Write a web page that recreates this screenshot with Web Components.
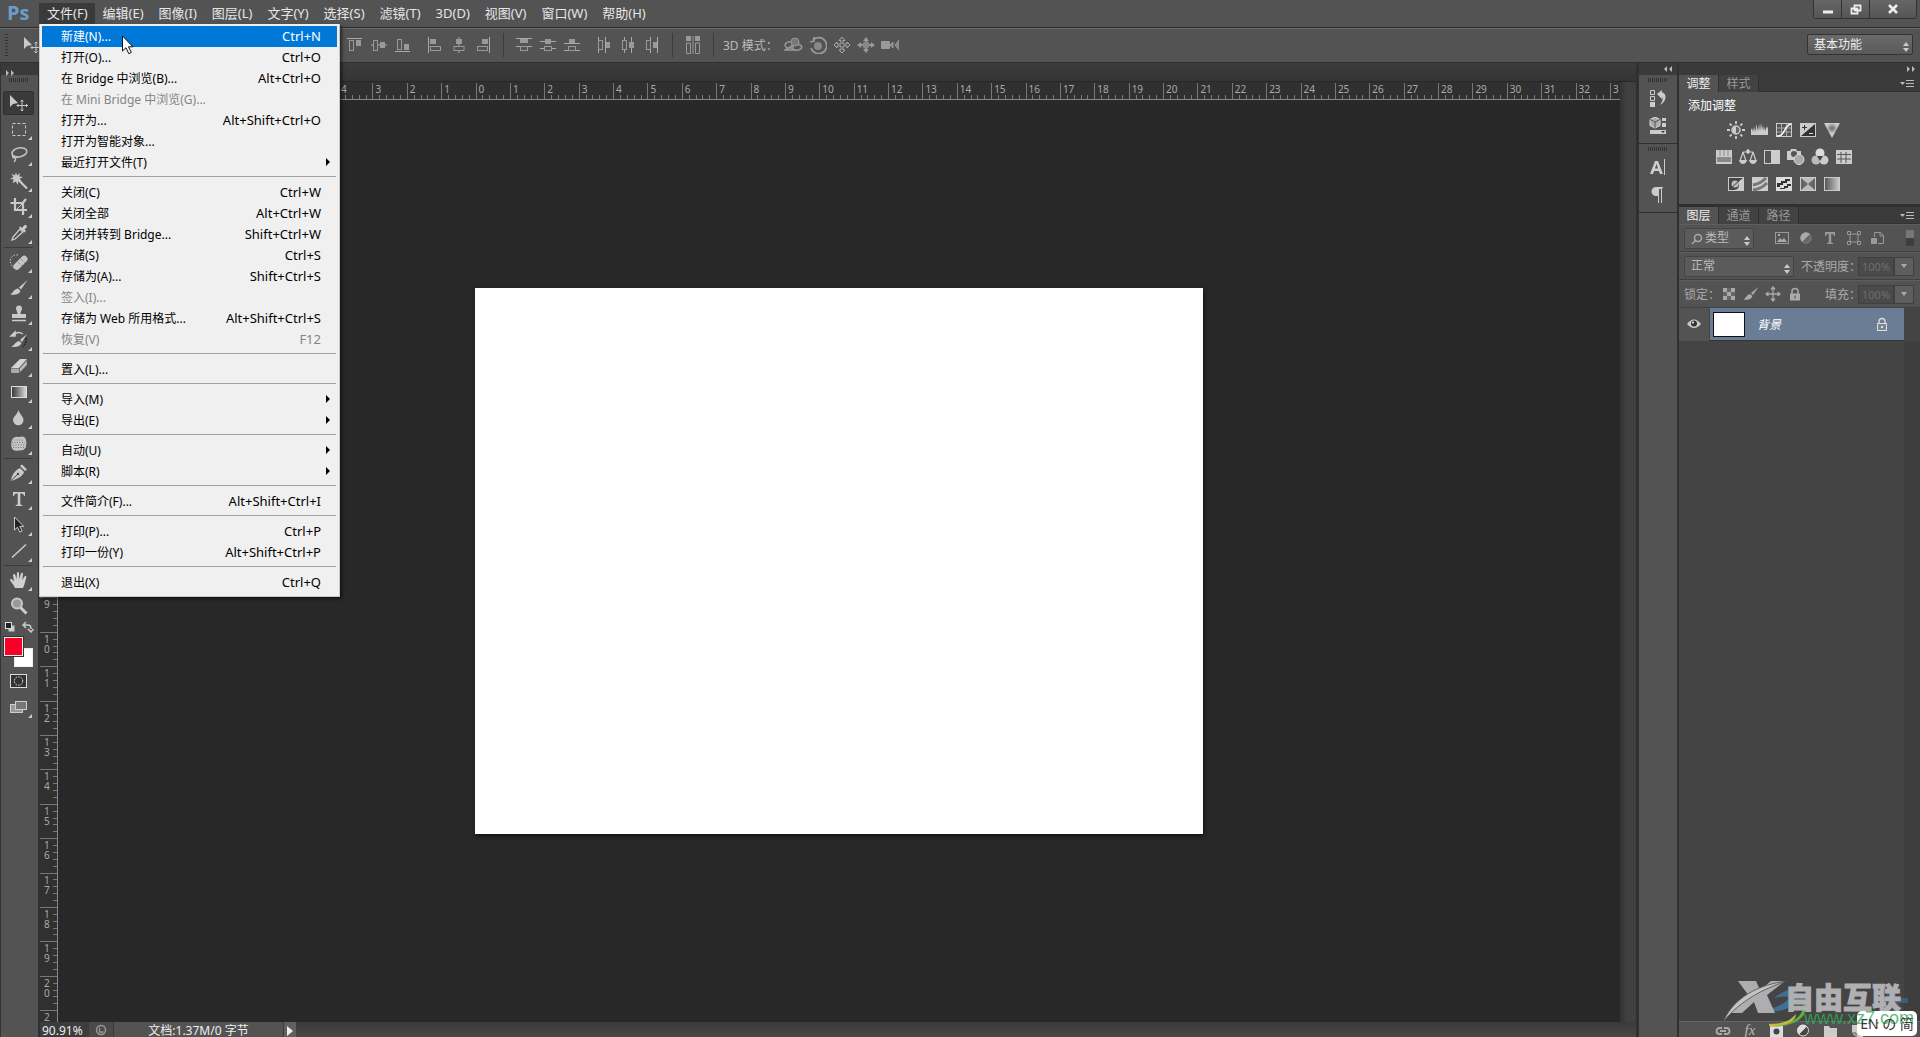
<!DOCTYPE html>
<html lang="zh-CN">
<head>
<meta charset="utf-8">
<title>Photoshop</title>
<style>
html,body{margin:0;height:100%}
body{background:#535353;color:#e6e6e6;font:12px "Noto Sans","Noto Sans CJK SC",sans-serif;overflow:hidden}
</style>
</head>
<body>
<ps-app></ps-app>
<script>
const ICONS = {
move:['20 20','<path d="M1 2v12l3-3 5-1z" fill="#c9c9c9"/><path d="M13 7v11M8 12.500h11M11.500 8.500 13 7l1.500 1.500M11.500 16.500 13 18l1.500-1.500M9.500 11 8 12.500 9.500 14M17 11l1.500 1.500L17 14" fill="none" stroke="#c9c9c9"/>'],
marquee:['20 20','<rect x="3.500" y="4.500" width="13" height="12" fill="none" stroke="#ccc" stroke-dasharray="3 2"/>'],
lasso:['20 20','<ellipse cx="10.500" cy="7.500" rx="7.500" ry="4.500" fill="none" stroke="#c4c4c4" stroke-width="1.600" transform="rotate(-12 10 8)"/><path d="M4 10c-1 2 0 3 2 3 1.500 1 0 3-1 4" fill="none" stroke="#c4c4c4" stroke-width="1.400"/>'],
wand:['20 20','<path d="M7 1l1 3.500L11 2l-.8 3.500L14 6l-3.200 1.800L13 11l-3.500-1L8.500 14 7 10.500 3.500 12l1.200-3.500L1 7.500l3.500-1.300L2.500 3 6 4.300z" fill="#c9c9c9"/><path d="M10 9.500l8 8" stroke="#c9c9c9" stroke-width="2.200"/>'],
crop:['20 20','<path d="M6 1v12h12M1.500 6H14v12M13 7l4-5" fill="none" stroke="#c9c9c9" stroke-width="2.200"/><path d="M8 12l5-5" stroke="#ccc"/>'],
eyedrop:['20 20','<path d="M3 17l1-3 7-8 3 3-8 7z" fill="none" stroke="#ccc" stroke-width="1.300"/><path d="M10 4.500l1.500-1 1.500 1.500 2.500-3q2.500-.5 2.500 2L15.500 6.500 17 8l-1.500 1.500z" fill="#ccc"/>'],
heal:['20 20','<path d="M9 3C3 2 0 7 2 12s4 4 4 4" fill="none" stroke="#ccc" stroke-dasharray="1.500 1.500"/><rect x="3" y="7.500" width="17" height="6.500" rx="3" fill="#c6c6c6" transform="rotate(-45 11.500 10.750)"/><path d="M9 10l4 4M12 7l4 4" stroke="#777" stroke-dasharray="1 1"/>'],
brush:['20 20','<path d="M18.500 2L10 9.500l2 2z" fill="#ccc"/><path d="M9 10.500l2.500 2.500C10 17 6 17 1 16.500c3-1 3-5 8-6z" fill="#ccc"/>'],
stamp:['20 20','<path d="M7 4.500a3 3 0 0 1 6 0c0 2-1.500 3-1.500 5.500H17v4H3v-4h5.500C8.500 7.500 7 6.500 7 4.500z" fill="#c9c9c9"/><path d="M3 16.500h14" stroke="#ccc" stroke-width="1.500"/>'],
history:['20 20','<path d="M18 4l-7 6 2 2z" fill="#ccc"/><path d="M10 11l2.500 2C11 17 7 17 2 17c3-1 4-5 8-6z" fill="#ccc"/><path d="M4 6c3-4 7-4 10-2M2 6l4-4v4z" fill="none" stroke="#ccc" stroke-width="1.500"/><path d="M17 8v4l-3 5" fill="none" stroke="#222" stroke-dasharray="2 1" stroke-width="1.500"/>'],
eraser:['20 20','<path d="M2 12L11 3h7l-8 9z" fill="#d4d4d4"/><path d="M2 12.500h8V17H3.500Q2 17 2 15.500z" fill="#aaa"/><path d="M10.800 12.500l7-8V9l-7 7.500z" fill="#bbb"/>'],
gradient:['20 20','<defs><linearGradient id="g"><stop stop-color="#333"/><stop offset="1" stop-color="#ddd"/></linearGradient></defs><rect x="2.500" y="4.500" width="15" height="11" fill="url(#g)" stroke="#ddd"/>'],
drop:['20 20','<path d="M9.500 2c1 4 5 6.500 5 10a5 5 0 0 1-10.500 0c0-3 4.500-6 5.500-10z" fill="#c9c9c9"/>'],
sponge:['20 20','<path d="M3 6q2-4 7-3 6-2 7 3 1 3 0 7-2 4-7 3.500Q4 18 2.500 13 1.500 9 3 6z" fill="#c4c4c4"/><path d="M5 6h10M3 8.500h13M4 11h13M4 13.500h12" stroke="#777" stroke-dasharray="1 1.500"/>'],
pen:['20 20','<path d="M1.500 18C3 12 6 7 11 5l4 4c-1 4-6 7-13.500 9z" fill="#c9c9c9"/><path d="M2 17.500L9 11" stroke="#444"/><circle cx="9" cy="11" r="1.200" fill="#444"/><path d="M13 1.500l5 5-2 1.500-5-5z" fill="#ccc"/>'],
type:['20 20','<path d="M4 3h12v4h-1q0-2.500-3-2.500h-.7V15q0 1 2 1v1H6.700v-1q2 0 2-1V4.500H8Q5 4.500 5 7H4z" fill="#ccc"/>'],
select:['20 20','<path d="M5.500 2v13l3-2.800 2.300 5 2.300-1.200-2.300-4.600h4z" fill="#222" stroke="#ccc"/>'],
line:['20 20','<path d="M3 16.500L17 3.500" stroke="#ccc" stroke-width="1.500"/>'],
hand:['20 20','<path d="M6 18c-1-3-4-6-5-8 0-1.500 2-1.200 3 .5l1 1L4 5c0-1.500 2-1.500 2.300 0L7.500 9 8 3c.2-1.500 2-1.500 2 0l.3 6L12 3.500c.6-1.400 2.200-.8 2 .5L13.300 10l2.200-3.500c.8-1.300 2.200-.5 1.800.8C16.500 11 15.500 15 14 18z" fill="#d0d0d0"/>'],
zoom:['20 20','<circle cx="8" cy="7.500" r="5" fill="#999" stroke="#c6c6c6" stroke-width="2"/><path d="M11.500 11.500l6 6" stroke="#ccc" stroke-width="3"/>'],
defcol:['12 12','<rect x="4.500" y="4.500" width="6" height="6" fill="#ccc"/><rect x="1.500" y="1.500" width="6" height="6" fill="#222" stroke="#ddd"/>'],
swap:['12 12','<path d="M1 4h5q3 0 3 4M4 1L1 4l3 3M6 8l3 3 2.500-3" fill="none" stroke="#ccc" stroke-width="1.500"/>'],
qmask:['20 20','<rect x="1.500" y="3.500" width="16" height="13" fill="#333" stroke="#ddd"/><circle cx="9.500" cy="10" r="4.200" fill="none" stroke="#eee" stroke-dasharray="1.500 1.200"/>'],
screen:['20 20','<rect x="1.500" y="7.500" width="12" height="8" fill="#999" stroke="#ccc"/><rect x="6.500" y="4.500" width="11" height="8" fill="#777" stroke="#ccc"/>'],
at:['16 16','<path d="M0 1.500h15" stroke="#aaa"/><rect x="2.500" y="3.500" width="4" height="10" fill="none" stroke="#999"/><rect x="9" y="3" width="5" height="6" fill="#999"/>'],
am:['16 16','<path d="M0 8h16" stroke="#aaa"/><rect x="2.500" y="3.500" width="4" height="10" fill="#535353" stroke="#999"/><rect x="9" y="5" width="5" height="6" fill="#999"/>'],
ab:['16 16','<path d="M0 14.500h15" stroke="#aaa"/><rect x="2.500" y="2.500" width="4" height="10" fill="none" stroke="#999"/><rect x="9" y="7" width="5" height="6" fill="#999"/>'],
al:['16 16','<path d="M1.500 0v16" stroke="#aaa"/><rect x="3" y="2" width="6" height="5" fill="#999"/><rect x="3.500" y="9.500" width="10" height="4" fill="none" stroke="#999"/>'],
ac:['16 16','<path d="M8 0v16" stroke="#aaa"/><rect x="5" y="2" width="6" height="5" fill="#999"/><rect x="3" y="9.500" width="10" height="4" fill="#535353" stroke="#999"/>'],
ar:['16 16','<path d="M14.500 0v16" stroke="#aaa"/><rect x="7" y="2" width="6" height="5" fill="#999"/><rect x="2.500" y="9.500" width="10" height="4" fill="none" stroke="#999"/>'],
dt:['16 16','<path d="M0 1.500h16M0 9.500h16" stroke="#aaa"/><rect x="4" y="2" width="8" height="4" fill="#999"/><rect x="4.500" y="9.500" width="7" height="4" fill="none" stroke="#999"/>'],
dm:['16 16','<path d="M0 4.500h16M0 11.500h16" stroke="#aaa"/><rect x="5" y="2" width="6" height="5" fill="#999"/><rect x="4.500" y="9.500" width="7" height="4" fill="#535353" stroke="#999"/>'],
db:['16 16','<path d="M0 6.500h16M0 13.500h16" stroke="#aaa"/><rect x="5" y="2" width="6" height="4" fill="#999"/><rect x="4.500" y="9.500" width="7" height="4" fill="none" stroke="#999"/>'],
dl:['16 16','<path d="M2.500 0v16M9.500 0v16" stroke="#aaa"/><rect x="2.500" y="3.500" width="4" height="9" fill="none" stroke="#999"/><rect x="10" y="5" width="4" height="6" fill="#999"/>'],
dc:['16 16','<path d="M4.500 0v16M11.500 0v16" stroke="#aaa"/><rect x="2.500" y="3.500" width="4" height="9" fill="#535353" stroke="#999"/><rect x="9" y="5" width="5" height="6" fill="#999"/>'],
dr:['16 16','<path d="M6.500 0v16M13.500 0v16" stroke="#aaa"/><rect x="2.500" y="3.500" width="4" height="9" fill="none" stroke="#999"/><rect x="9" y="5" width="4" height="6" fill="#999"/>'],
auto:['18 18','<rect x="2" y="0" width="5" height="5" fill="#999"/><rect x="11" y="0" width="5" height="5" fill="#999"/><path d="M2.500 7v10.500h4V7zM11.500 7v10.500h4V7z" fill="none" stroke="#999"/><path d="M9 0v18" stroke="#999"/>'],
o1:['20 18','<path d="M8 6C2 5-1 9 3 12h5M1 14h8V9zM13 8c6 1 6 5 1 6-2 .5-4 0-6-1" fill="none" stroke="#999" stroke-width="1.500"/><circle cx="11" cy="6" r="4" fill="#777" stroke="#999"/>'],
o2:['18 18','<circle cx="9" cy="10" r="4" fill="#888"/><path d="M4 4a8 8 0 1 1-2 8M5 1v4l-4 1" fill="none" stroke="#999" stroke-width="1.800"/>'],
o3:['18 18','<path d="M9 1l3 3.500h-2V8h4V6l3 3-3 3v-2h-4v4h2l-3 3-3-3h2v-4H4v2L1 9l3-3v2h4V4.500H6z" fill="none" stroke="#aaa"/>'],
o4:['18 18','<path d="M9 1l3 4H6zM9 17l-3-4h6zM0 9l4-3v6zM18 9l-4-3v6z" fill="#999"/><path d="M4 9h10M9 5v8" stroke="#999" stroke-width="2"/><circle cx="9" cy="9" r="3.500" fill="#888"/>'],
o5:['20 18','<rect x="1" y="5" width="9" height="8" rx="1" fill="#999"/><path d="M10 9l3-3v6zM19 4l-4 5 4 5" fill="#888" stroke="#999"/>'],
hist:['18 18','<path d="M1.500 1.500h4v4h-4zM1.500 7.500h4v4h-4z" fill="none" stroke="#ccc"/><rect x="1" y="13" width="5" height="5" fill="#ccc"/><path d="M8 5l5-4v2.500c5 .5 5 9-2 12.500 3-4 3-7 2-8v2z" fill="#ccc"/>'],
prop:['18 18','<path d="M6 0l5 2.500v6L6 11 1 8.500v-6z" fill="#aaa" stroke="#ddd"/><path d="M1 2.500L6 5l5-2.500M6 5v6" fill="none" stroke="#555"/><path d="M13 1h4v3h-4zM13 6h4v4h-4zM1 13h16v4H1z" fill="#ccc"/><path d="M12 14h4l-2 2z" fill="#333"/>'],
chr:['18 18','<path d="M1 16L6 3h3l5 13h-3l-1.200-3H5.200L4 16zM6 10.500h3L7.500 6z" fill="#ccc" fill-rule="evenodd"/><path d="M15.500 1v16" stroke="#ccc"/>'],
para:['18 18','<path d="M14 1H7a4.500 4.500 0 0 0 0 9h2v7h1V3h2v14h1V2h1z" fill="#ccc"/>'],
sun:['18 18','<circle cx="9" cy="9" r="4" fill="#666" stroke="#ccc" stroke-width="1.500"/><path d="M9 5.500a3.500 3.500 0 0 0 0 7z" fill="#ccc"/><path d="M9 0v3M9 15v3M0 9h3M15 9h3M2.700 2.700l2 2M13.300 13.300l2 2M2.700 15.300l2-2M13.300 4.700l2-2" stroke="#ccc" stroke-width="1.800"/>'],
levels:['18 18','<path d="M0 14V9l1-2 1 4V6l1 5 1-6v6l1-4V3l2 7 1-7 1 7 1-8 1 7 1-5v6l1-5 1 5 2-5 1 3v6z" fill="#ccc"/>'],
curves:['18 18','<rect x="1.500" y="2.500" width="15" height="13" fill="#555" stroke="#ccc"/><path d="M6.500 3v12M11.500 3v12M2 7h14M2 11h14" stroke="#aaa"/><path d="M2 15c9 0 6-10 14-12" fill="none" stroke="#fff" stroke-width="1.500"/>'],
expo:['18 18','<rect x="1.500" y="2.500" width="15" height="13" fill="#333" stroke="#ccc"/><path d="M2 15V3h14z" fill="#ccc"/><path d="M3 6.500h5M5.500 4v5" stroke="#333"/><path d="M10 12.500h4" stroke="#ddd"/>'],
vib:['18 18','<defs><radialGradient id="v" cy=".35"><stop stop-color="#666"/><stop offset=".7" stop-color="#ccc"/></radialGradient></defs><path d="M1 2h16L9 17z" fill="url(#v)"/>'],
hue:['18 18','<rect x="1" y="2" width="16" height="14" fill="#ccc"/><path d="M5 2v6M9 2v6M13 2v6" stroke="#888"/><rect x="2" y="9" width="14" height="5" fill="#888"/>'],
bal:['18 18','<path d="M4 4h10M9 1v5M4 4L1 13M4 4l3 9M14 4l-3 9M14 4l3 9" fill="none" stroke="#ccc" stroke-width="1.200"/><circle cx="9" cy="3.500" r="2" fill="#ccc"/><path d="M0 12h8q-1 4-4 4t-4-4zM10 12h8q-1 4-4 4t-4-4z" fill="#ccc"/>'],
bw:['18 18','<rect x="1.500" y="2.500" width="15" height="13" fill="#555" stroke="#ccc"/><rect x="8" y="3" width="8" height="12" fill="#ccc"/>'],
photo:['18 18','<path d="M0 3h3l1-2h5l1 2h4v9H0z" fill="#ccc"/><circle cx="7" cy="6" r="3" fill="#555"/><circle cx="12" cy="11.500" r="5" fill="#aaa" stroke="#ddd"/>'],
mixer:['18 18','<circle cx="9" cy="5" r="4.500" fill="#ddd"/><circle cx="5" cy="12" r="4.500" fill="#bbb"/><circle cx="13" cy="12" r="4.500" fill="#ccc"/><path d="M6 8h6l-3 5z" fill="#444"/>'],
lut:['18 18','<rect x="1" y="2" width="16" height="14" fill="#ccc"/><path d="M6 4v11M11 4v11M2 6.500h14M2 11h14" stroke="#555"/>'],
inv:['18 18','<rect x="1.500" y="2.500" width="15" height="13" fill="#444" stroke="#ccc"/><path d="M16 3v12H7q7-1 4-8z" fill="#ccc"/><circle cx="8" cy="9" r="3.500" fill="#bbb"/><path d="M5 12l7-6" stroke="#444"/>'],
post:['18 18','<rect x="1" y="2" width="16" height="14" fill="#ccc"/><path d="M2 10q7-1 13-7M2 15q8-1 14-7" stroke="#777" stroke-width="3" fill="none"/>'],
thr:['18 18','<rect x="1" y="2" width="16" height="14" fill="#ddd"/><path d="M2 10V8h4V6h4V4h5v2h-3v2H8v2H5v2H2zM5 14v-1h4v-2h3V9h4v2h-3v2h-3v1z" fill="#333"/>'],
sel:['18 18','<rect x="1.500" y="2.500" width="15" height="13" fill="#666" stroke="#ccc"/><path d="M2 3h14L9 9zM2 15h14L9 9z" fill="#bbb"/>'],
gmap:['18 18','<defs><linearGradient id="m"><stop stop-color="#555"/><stop offset="1" stop-color="#ccc"/></linearGradient></defs><rect x="1.500" y="2.500" width="15" height="13" fill="url(#m)" stroke="#ccc"/>'],
pmenu:['16 12','<path d="M0 4h5L2.500 7z" fill="#bbb"/><path d="M6 2.500h8M6 5.500h8M6 8.500h8" stroke="#bbb"/>'],
fimg:['18 18','<rect x="2.500" y="3.500" width="13" height="11" fill="#555" stroke="#999"/><path d="M4 13l3-4 2 2 2-2 3 4zM5 5h2v2H5z" fill="#aaa"/>'],
fadj:['18 18','<circle cx="9" cy="9" r="5" fill="#666" stroke="#888"/><path d="M5 13A5.500 5.500 0 1 1 13 5z" fill="#aaa"/>'],
ftype:['18 18','<path d="M4 3h10v4h-1q0-2-2-2h-.8v8q0 1 1.800 1v1H6v-1q1.800 0 1.800-1V5H7Q5 5 5 7H4z" fill="#999"/>'],
fshape:['18 18','<path d="M5 5h8v8H5z" fill="none" stroke="#999"/><path d="M2.500 2.500h3v3h-3zM12.500 2.500h3v3h-3zM2.500 12.500h3v3h-3zM12.500 12.500h3v3h-3z" fill="#535353" stroke="#999"/>'],
fsmart:['18 18','<path d="M5.500 8V3.500h6l3 3v8H9" fill="none" stroke="#999"/><path d="M11 3v4h4" fill="none" stroke="#999"/><rect x="2" y="9" width="6" height="6" fill="#999"/>'],
lpx:['14 14','<rect x="1" y="1" width="12" height="12" fill="#666"/><path d="M1 1h4v4H1zM9 1h4v4H9zM5 5h4v4H5zM1 9h4v4H1zM9 9h4v4H9z" fill="#aaa"/>'],
lbrush:['16 16','<path d="M15.500 1L8 7l2 2z" fill="#aaa"/><path d="M7 8l2.500 2C8 14 5 14 0 13.500 3 13 3 9 7 8z" fill="#aaa"/>'],
lmove:['16 16','<path d="M8 1v14M1 8h14M6 3.500L8 1l2 2.500M6 12.500L8 15l2-2.500M3.500 6L1 8l2.500 2M12.500 6L15 8l-2.500 2" fill="none" stroke="#aaa" stroke-width="1.300"/>'],
lock:['14 14','<path d="M4 7V4.500a3 3 0 0 1 6 0V7" fill="none" stroke="#aaa" stroke-width="1.500"/><rect x="2" y="6.500" width="10" height="7" fill="#aaa"/><rect x="6.500" y="8.500" width="1" height="3" fill="#444"/>'],
lock2:['14 14','<path d="M4 7V4.500a3 3 0 0 1 6 0V7" fill="none" stroke="#ddd" stroke-width="1.300"/><rect x="2.500" y="6.500" width="9" height="7" fill="#7b8796" stroke="#ddd"/><rect x="6" y="9" width="2" height="2" fill="#ddd"/>'],
eye:['14 12','<path d="M0 6q7-9 14 0-7 8-14 0z" fill="#ccc"/><circle cx="7" cy="5.500" r="3" fill="#333"/><circle cx="6" cy="4.500" r="1" fill="#fff"/>'],
search:['12 12','<circle cx="7" cy="5" r="3.500" fill="none" stroke="#aaa" stroke-width="1.500"/><path d="M4.500 7.500L1 11" stroke="#aaa" stroke-width="1.500"/>'],
link:['16 16','<path d="M7 5H4.500a3 3 0 0 0 0 6H7M9 5h2.500a3 3 0 0 1 0 6H9M5 8h6" fill="none" stroke="#aaa" stroke-width="1.800"/>'],
mask:['16 16','<rect x="1" y="3" width="13" height="11" fill="#ddd"/><circle cx="7.500" cy="8.500" r="3" fill="#444"/>'],
adj:['16 16','<circle cx="7" cy="7.500" r="5.500" fill="#444" stroke="#ddd"/><path d="M3 11.500A5.500 5.500 0 0 1 11 3.500z" fill="#ddd"/><path d="M12 14h4l-2 2z" fill="#ddd"/>'],
folder:['16 16','<path d="M1 3h5l1 2h7v9H1z" fill="#ccc"/>'],
newl:['16 16','<path d="M2 2h11v12H6l-4-4z" fill="#ccc"/><path d="M2 10h4v4" fill="none" stroke="#555"/>'],
min:['14 14','<path d="M2 10h10" stroke="#eee" stroke-width="3"/>'],
rest:['14 14','<path d="M5.500 3.500h6v5h-6zM2.500 6.500h6v5h-6z" fill="#444" stroke="#eee" stroke-width="1.800"/>'],
close:['14 14','<path d="M3 3l8 8M11 3l-8 8" stroke="#eee" stroke-width="2.500"/>'],
sync:['14 14','<circle cx="7" cy="7" r="4.500" fill="none" stroke="#999" stroke-width="1.500"/><path d="M5.500 4.500v4.500h4" fill="none" stroke="#999" stroke-width="1.300"/>'],
play:['8 10','<path d="M1 0l6 5-6 5z" fill="#eee"/>'],
right2:['10 8','<path d="M1 1l3 3-3 3zM6 1l3 3-3 3z" fill="#bbb"/>'],
left2:['10 8','<path d="M4 1L1 4l3 3zM9 1L6 4l3 3z" fill="#bbb"/>'],
arrow:['6 10','<path d="M1 1l4 4-4 4z" fill="#000"/>'],
updn:['6 10','<path d="M0 4l3-4 3 4zM0 6h6l-3 4z" fill="#ccc"/>'],
dn:['8 6','<path d="M1 1h6L4 5z" fill="#aaa"/>'],
cursor:['14 20','<path d="M1.500 1v15l3.500-3.300 2.800 6 2.500-1.200-2.800-5.700H12z" fill="#fff" stroke="#111"/>'],
xlogo:['70 48','<path d="M15 1h18l4 9L48 1h14L44 15l8 18H35l-4-11-12 11H8l18-17z" fill="#aeaeb0"/><path d="M0 42C8 24 26 6 64 1 40 9 18 20 0 42z" fill="#c4c4c6" stroke="#4a4a4a" stroke-width=".8"/>'],
swoosh:['150 48','<path d="M0 26c24 6 34-10 32-24C26 6 14 8 10 14c6-2 12-2 14 0C20 20 10 24 0 26z" fill="#3f7fae" opacity=".75"/><path d="M4 40c22 2 37-7 34-24 10 14-8 29-34 26z" fill="#5fae45"/><path d="M4 40c15 0 22-4 27-10 0 8-12 13-27 12z" fill="#c8b83c"/><path d="M122 8h9v6h12v5h-9v10h-7V19h-5z" fill="#3f6f96" opacity=".6"/>']
};
const define = (name, css, html) => customElements.define(name, class extends HTMLElement {
  connectedCallback(){
    if (this.shadowRoot) return;
    const root = this.attachShadow({mode:'open'});
    const t = document.createElement('template');
    t.innerHTML = '<style>*{box-sizing:border-box}button,input,select{font:inherit;color:inherit;margin:0;border-radius:0}'+css+'</style>'+(typeof html==='function'?html(this):html);
    root.append(t.content.cloneNode(true));
  }
});
const ic = n => `<ps-icon name="${n}"></ps-icon>`;

define('ps-icon', ':host{display:inline-flex;flex:none}svg{display:block}', el => {
  const [box, body] = ICONS[el.getAttribute('name')], [w,h] = box.split(' ');
  return `<svg width="${w}" height="${h}" viewBox="0 0 ${box}" aria-hidden="true">${body}</svg>`;
});

/* ---- top bars ---- */
define('ps-menubar', `:host{display:flex;height:28px;background:#535353;border-bottom:1px solid #2c2c2c;font-size:13px}
.logo{width:39px;padding-left:7px;font:bold 20px/25px "Open Sans",sans-serif;color:#6b9dc8}
nav{display:flex;flex:1;padding-top:3px}nav button{height:21px;padding:0 7px 0 8px;border:0;background:none;line-height:19px;white-space:nowrap}
nav button.on{background:#3a3a3a}
.win{display:flex;height:19px;margin-right:3px;border:1px solid #333;border-top:0;border-radius:0 0 3px 3px}
.win button{display:flex;align-items:center;justify-content:center;width:28px;padding:0;border:0;border-right:1px solid #333;background:linear-gradient(#666,#555)}
.win button:last-child{width:46px;border:0}`,
`<div class="logo">Ps</div><nav>${['文件(F)','编辑(E)','图像(I)','图层(L)','文字(Y)','选择(S)','滤镜(T)','3D(D)','视图(V)','窗口(W)','帮助(H)'].map((t,i)=>`<button${i?'':' class="on"'}>${t}</button>`).join('')}</nav>
<div class="win"><button aria-label="最小化">${ic('min')}</button><button aria-label="还原">${ic('rest')}</button><button aria-label="关闭">${ic('close')}</button></div>`);

define('ps-select', `:host{display:flex;position:relative;height:21px;color:#eee}
select{appearance:none;width:100%;padding:0 16px 1px 6px;border:1px solid #333;border-radius:2px;background:linear-gradient(#6b6b6b,#595959);outline:0}
:host([dim]) select{background:#5b5b5b;border-color:#444;color:#bbb}:host([icon]) select{padding-left:20px}
.a{position:absolute;right:4px;top:5px}.i{position:absolute;left:7px;top:4px}`,
el => `<select aria-label="${el.getAttribute('value')}"><option>${el.getAttribute('value')}</option></select>${el.hasAttribute('icon')?`<span class="i">${ic('search')}</span>`:''}<span class="a">${ic('updn')}</span>`);

define('ps-options', `:host{display:flex;align-items:center;height:35px;background:#535353;border-top:1px solid #6a6a6a;border-bottom:1px solid #303030;padding:0 7px 2px 5px}
.grip{width:3px;height:22px;background:repeating-linear-gradient(#333 0 1px,transparent 1px 3px)}
.cur{margin-left:15px;width:320px;display:flex}
.grp{display:flex}.grp button{display:flex;align-items:center;justify-content:center;width:24px;height:24px;padding:0;border:0;background:none}
.grp+.grp{margin-left:8px}.grp.mode{margin-left:4px}
hr{width:1px;height:24px;border:0;margin:0 8px;background:#3c3c3c}
.m{margin-left:1px;color:#bbb;white-space:nowrap}
ps-select{margin-left:auto;width:106px}`,
(()=>{const g=a=>`<div class="grp">${a.map(n=>`<button aria-label="${n}">${ic(n)}</button>`).join('')}</div>`;
return `<div class="grip"></div><div class="cur">${ic('move')}</div>${g(['at','am','ab'])}${g(['al','ac','ar'])}<hr>${g(['dt','dm','db'])}${g(['dl','dc','dr'])}<hr>${g(['auto'])}<hr><span class="m">3D 模式：</span>${g(['o1','o2','o3','o4','o5']).replace('"grp"','"grp mode"')}<ps-select value="基本功能"></ps-select>`})());

/* ---- file menu ---- */
define('ps-item', `:host{display:block}
button{display:flex;align-items:center;width:100%;height:21px;padding:0 16px 2px 19px;border:0;background:none;color:#000;white-space:nowrap}
:host([on]) button{background:#0078d7;color:#fff}:host([off]) button{color:#858585}
kbd{margin-left:auto;font:13px "Noto Sans",sans-serif}ps-icon{margin:0 -10px 0 auto}`,
el => `<button><slot></slot>${el.hasAttribute('sub')?ic('arrow'):`<kbd>${el.getAttribute('keys')||''}</kbd>`}</button>`);
define('ps-menu', `:host{display:block;width:301px;padding:2px 2px 3px;background:#f0f0f0;border:1px solid #c8c8c8;border-width:0 1px 1px;box-shadow:2px 2px 3px #0008;box-sizing:border-box}
::slotted(hr){height:1px;margin:3px 1px 5px;border:0;background:#a0a0a0}`, '<slot></slot>');

/* ---- tools ---- */
define('ps-tools', `:host{display:flex;flex-direction:column;align-items:center;width:40px;padding-right:2px;background:#535353;border-right:2px solid #303030;border-left:1px solid #333;box-sizing:border-box}
.hd{align-self:stretch;height:12px;margin-right:-2px;background:#3a3a3a;padding:1px 4px}.grip{width:20px;height:4px;margin:3px 0 8px;background:repeating-linear-gradient(90deg,#333 0 1px,transparent 1px 2px)}
.t{position:relative;display:flex;align-items:center;justify-content:center;width:31px;height:26px;padding:0;border:0;background:none}
.t.on{background:#3a3a3a;border:1px solid #303030;border-radius:2px;height:24px;margin:1px 0}
.t.sub::after{content:"";position:absolute;right:2px;bottom:2px;border:2px solid #ccc;border-color:transparent #ccc #ccc transparent}
hr{width:29px;height:1px;margin:1px 0;border:0;background:#3c3c3c}
.mini{display:flex;gap:6px;height:14px;margin-top:1px;align-items:center}
.sw{position:relative;width:29px;height:30px;margin:3px 0 1px}.sw i{position:absolute;width:19px;height:19px;border:1px solid #eee}
.fg{left:0;top:0;background:#fa0028;outline:1px solid #333}.bg{right:0;bottom:0;background:#fff}`,
(()=>{const b=(n,s=1)=>`<button class="t${s?' sub':''}" aria-label="${n}">${ic(n)}</button>`,g=a=>a.map(n=>b(n)).join('');
return `<div class="hd">${ic('right2')}</div><div class="grip"></div><button class="t on" aria-label="move">${ic('move')}</button>${g(['marquee','lasso','wand','crop','eyedrop'])}<hr>${g(['heal','brush','stamp','history','eraser','gradient','drop','sponge'])}<hr>${g(['pen','type','select','line'])}<hr>${b('hand')}${b('zoom',0)}<div class="mini">${ic('defcol')}${ic('swap')}</div><div class="sw"><i class="bg"></i><i class="fg"></i></div>${b('qmask',0)}${b('screen')}`})());

/* ---- rulers: five divisions for each unit ---- */
define('ps-ruler', `:host{display:flex;background:#303030;color:#aaa;font-size:10px;line-height:10px;overflow:hidden}
.c{flex:1 1 0;position:relative;display:flex;min-width:0;min-height:0;align-items:flex-end}
.c i{flex:1 1 0;height:4px;border-left:1px solid #777}.c i:first-of-type{height:16px}
.c b{position:absolute;left:3px;top:1px;font-weight:normal}
:host([axis=x]){border-bottom:1px solid #888;padding:1px 0 0 5px}:host([axis=x]) .end{flex:0 0 10px}
:host([axis=y]){flex-direction:column;border-right:1px solid #888;padding-top:16px}
:host([axis=y]) .c{flex-direction:column}:host([axis=y]) .c i{height:auto;width:4px;border-left:0;border-top:1px solid #777}
:host([axis=y]) .c i:first-of-type{width:17px}:host([axis=y]) .c b{left:4px;top:2px;width:7px;word-break:break-all}
:host([axis=y]) .end{flex:0 0 12px}`,
el => {const x=el.getAttribute('axis')==='x',s=x?-12:-5,e=x?33:21,f=+el.getAttribute('from');let o='';
for(let n=s;n<=e;n++)o+=`<div class="c${n===e?' end':''}">${n>=f?`<b>${n===e?String(n)[0]:Math.abs(n)}</b>`:''}${(n===e?'<i></i>':'<i></i>'.repeat(5))}</div>`;return o;});

define('ps-work', `:host{display:grid;flex:1;min-width:0;grid-template:19px 18px 1fr 15px/18px 1fr 16px;background:#282828}
.strip{grid-column:1/-1;background:linear-gradient(#3c3c3c,#343434);border-bottom:1px solid #282828}
.corner{background:#303030;border:solid #888;border-width:0 1px 1px 0}
.track{grid-column:3;grid-row:2/4;background:linear-gradient(90deg,#333,#404040 40%)}
.cv{display:flex;align-items:center;justify-content:center;min-height:0;padding:0}
.doc{width:728px;height:546px;background:#fff;box-shadow:1px 2px 4px #0009}
.st{grid-column:1/-1;display:flex;align-items:center;background:#404040;line-height:15px;color:#eee;white-space:nowrap}
.st>*{height:15px}
.z{width:49px;padding:1px 0 0 2px;background:#3c3c3c}
.s{width:24px;display:flex;justify-content:center;background:#4a4a4a;padding-top:1px}
.d{width:171px;padding-top:1px;text-align:center;background:#535353;border:solid #3a3a3a;border-width:0 1px}
.p{display:flex;align-items:center;justify-content:center;width:12px;padding:2px 0 0;border:0;background:#606060}
.h{flex:1;background:linear-gradient(#3a3a3a,#484848)}`,
`<div class="strip"></div><div class="corner"></div><ps-ruler axis="x" from="-4"></ps-ruler><div class="track"></div><ps-ruler axis="y" from="9"></ps-ruler><div class="cv"><div class="doc"></div></div>
<div class="st"><span class="z">90.91%</span><span class="s">${ic('sync')}</span><span class="d">文档:1.37M/0 字节</span><button class="p" aria-label="菜单">${ic('play')}</button><span class="h"></span></div>`);

/* ---- docks ---- */
define('ps-dock', `:host{display:flex;flex-direction:column;width:43px;background:#535353;border:solid #303030;border-width:0 2px 0 3px;box-sizing:border-box}
.hd{height:12px;background:#3a3a3a;display:flex;justify-content:flex-end;padding:2px 4px 0}
.g{display:flex;flex-direction:column;align-items:center;height:69px;border-bottom:1px solid #303030}
.g i{flex:none;width:20px;height:4px;margin:3px 0 2px;background:repeating-linear-gradient(90deg,#333 0 1px,transparent 1px 2px)}
button{flex:none;display:flex;align-items:center;justify-content:center;width:28px;height:28px;padding:0;border:0;background:none}`,
`<div class="hd">${ic('left2')}</div><div class="g"><i></i><button aria-label="历史记录">${ic('hist')}</button><button aria-label="属性">${ic('prop')}</button></div><div class="g"><i></i><button aria-label="字符">${ic('chr')}</button><button aria-label="段落">${ic('para')}</button></div>`);

define('ps-tabs', `:host{display:flex;height:17px;background:#3b3b3b;border-bottom:1px solid #333;align-items:stretch;box-sizing:border-box}
button{width:40px;padding:0;border:0;border-right:1px solid #303030;background:#424242;color:#999;line-height:15px;height:17px}
button.on{background:#535353;color:#eee}span{margin:2px 4px 0 auto}`,
el => el.getAttribute('tabs').split(',').map((t,i)=>`<button${i?'':' class="on"'}>${t}</button>`).join('')+`<span>${ic('pmenu')}</span>`);

define('ps-adjust', `:host{display:block;height:115px;background:#535353;border-bottom:3px solid #303030;color:#fff;box-sizing:border-box}
.t{padding:5px 9px 2px;line-height:17px;height:24px}
.r{display:flex;justify-content:center;height:27px;align-items:center;padding-right:32px}
button{display:flex;justify-content:center;width:24px;padding:0;border:0;background:none}`,
(()=>{const r=a=>`<div class="r">${a.map(n=>`<button aria-label="${n}">${ic(n)}</button>`).join('')}</div>`;
return `<div class="t">添加调整</div>${r(['sun','levels','curves','expo','vib'])}${r(['hue','bal','bw','photo','mixer','lut'])}${r(['inv','post','thr','sel','gmap'])}`})());

define('ps-percent', `:host{display:flex;align-items:center;margin-left:auto;color:#aaa}
label{width:57px;white-space:nowrap}:host([short]) label{width:33px}
input{width:36px;height:19px;padding:0 3px;border:1px solid #404040;background:#4a4a4a;color:#6e6e6e;font-size:11px;outline:0}
button{display:flex;align-items:center;justify-content:center;width:20px;height:19px;padding:0;border:1px solid #404040;background:#5e5e5e}`,
el => `<label for="v">${el.getAttribute('label')}</label><input id="v" value="100%"><button aria-label="${el.getAttribute('label')}">${ic('dn')}</button>`);

define('ps-layers', `:host{display:flex;flex-direction:column;flex:1;min-height:0;background:#444}
.row{display:flex;align-items:center;height:28px;padding:0 6px 0 5px;background:#535353;border-bottom:1px solid #404040;border-top:1px solid #5e5e5e;color:#aaa}
.f ps-select{width:70px;margin-right:16px}.f .b{display:flex;width:24px;justify-content:center}
.tg{width:8px;height:16px;margin-left:auto;background:linear-gradient(#777 50%,#3d3d3d 50%)}
.m{width:110px}.k{flex:none;width:34px;white-space:nowrap}.l .b{display:flex;width:22px;justify-content:center}
.layer{display:flex;height:33px;background:#6b7d95;margin-right:16px;align-items:center;border-bottom:1px solid #333}
.e{display:flex;align-items:center;justify-content:center;width:31px;height:33px;background:#535353;border-right:1px solid #444}
.th{width:32px;height:25px;margin:0 12px 0 3px;background:#fff;border:1px solid #111}
.n{flex:1;font-style:italic;color:#fff}.layer>ps-icon{margin-right:15px}
.mid{flex:1;display:flex;justify-content:flex-end}.mid i{width:16px;background:#3e3e3e}
.ft{display:flex;align-items:center;height:16px;padding:2px 0 0 32px;background:#535353;border-top:1px solid #666;gap:3px}
.ft button{display:flex;align-items:center;justify-content:center;width:24px;height:15px;padding:0;border:0;background:none;color:#bbb;font:italic 15px/15px "Liberation Serif",serif}`,
`<div class="row f"><ps-select dim icon value="类型"></ps-select>${['fimg','fadj','ftype','fshape','fsmart'].map(n=>`<span class="b">${ic(n)}</span>`).join('')}<i class="tg"></i></div>
<div class="row"><ps-select dim class="m" value="正常"></ps-select><ps-percent label="不透明度："></ps-percent></div>
<div class="row l"><span class="k">锁定：</span>${['lpx','lbrush','lmove','lock'].map(n=>`<span class="b">${ic(n)}</span>`).join('')}<ps-percent short label="填充："></ps-percent></div>
<div class="layer"><span class="e">${ic('eye')}</span><span class="th"></span><span class="n">背景</span>${ic('lock2')}</div>
<div class="mid"><i></i></div>
<div class="ft"><button aria-label="链接">${ic('link')}</button><button>fx</button>${['mask','adj','folder','newl'].map(n=>`<button aria-label="${n}">${ic(n)}</button>`).join('')}</div>`);

define('ps-panels', `:host{display:flex;flex-direction:column;width:241px;background:#444}
.hd{height:12px;background:#3a3a3a;display:flex;justify-content:flex-end;padding:2px 4px 0}`,
`<div class="hd">${ic('right2')}</div><ps-tabs tabs="调整,样式"></ps-tabs><ps-adjust></ps-adjust><ps-tabs tabs="图层,通道,路径"></ps-tabs><ps-layers></ps-layers>`);

define('ps-mark', `:host{display:block;width:197px;height:57px;position:relative}
.x{position:absolute;left:0;top:0}.s{position:absolute;left:42px;top:4px}
.cn{position:absolute;left:62px;top:-1px;font:900 29px/34px "Noto Sans CJK SC",sans-serif;color:#b0b0b3;-webkit-text-stroke:1px #b0b0b3;white-space:nowrap}
.url{position:absolute;left:81px;top:28px;font:18px/20px "Liberation Sans",sans-serif;color:#2fae5acc}
.box,.ime{position:absolute;right:3px;bottom:1px;width:60px;height:25px;border-radius:5px}
.box{background:#fff}
.ime{color:#333;font:14px/25px "Noto Sans","Noto Sans CJK SC",sans-serif;text-align:center;white-space:nowrap}`,
`<span class="s">${ic('swoosh')}</span><span class="x">${ic('xlogo')}</span><span class="cn">自由互联</span><span class="box"></span><span class="url">www.xz7.com</span><span class="ime">EN の 简</span>`);

define('ps-app', `:host{display:flex;flex-direction:column;height:100vh;position:relative}
main{display:flex;flex:1;min-height:0}
ps-menu{position:absolute;left:39px;top:24px}.cur{position:absolute;left:121px;top:35px}
ps-mark{position:absolute;right:0;bottom:0}`,
`<ps-menubar></ps-menubar><ps-options></ps-options>
<main><ps-tools></ps-tools><ps-work></ps-work><ps-dock></ps-dock><ps-panels></ps-panels></main>
<ps-menu>
<ps-item on keys="Ctrl+N">新建(N)...</ps-item><ps-item keys="Ctrl+O">打开(O)...</ps-item><ps-item keys="Alt+Ctrl+O">在 Bridge 中浏览(B)...</ps-item><ps-item off>在 Mini Bridge 中浏览(G)...</ps-item><ps-item keys="Alt+Shift+Ctrl+O">打开为...</ps-item><ps-item>打开为智能对象...</ps-item><ps-item sub>最近打开文件(T)</ps-item><hr>
<ps-item keys="Ctrl+W">关闭(C)</ps-item><ps-item keys="Alt+Ctrl+W">关闭全部</ps-item><ps-item keys="Shift+Ctrl+W">关闭并转到 Bridge...</ps-item><ps-item keys="Ctrl+S">存储(S)</ps-item><ps-item keys="Shift+Ctrl+S">存储为(A)...</ps-item><ps-item off>签入(I)...</ps-item><ps-item keys="Alt+Shift+Ctrl+S">存储为 Web 所用格式...</ps-item><ps-item off keys="F12">恢复(V)</ps-item><hr>
<ps-item>置入(L)...</ps-item><hr><ps-item sub>导入(M)</ps-item><ps-item sub>导出(E)</ps-item><hr><ps-item sub>自动(U)</ps-item><ps-item sub>脚本(R)</ps-item><hr>
<ps-item keys="Alt+Shift+Ctrl+I">文件简介(F)...</ps-item><hr><ps-item keys="Ctrl+P">打印(P)...</ps-item><ps-item keys="Alt+Shift+Ctrl+P">打印一份(Y)</ps-item><hr><ps-item keys="Ctrl+Q">退出(X)</ps-item>
</ps-menu>
<span class="cur">${ic('cursor')}</span><ps-mark></ps-mark>`);
</script>
</body>
</html>
